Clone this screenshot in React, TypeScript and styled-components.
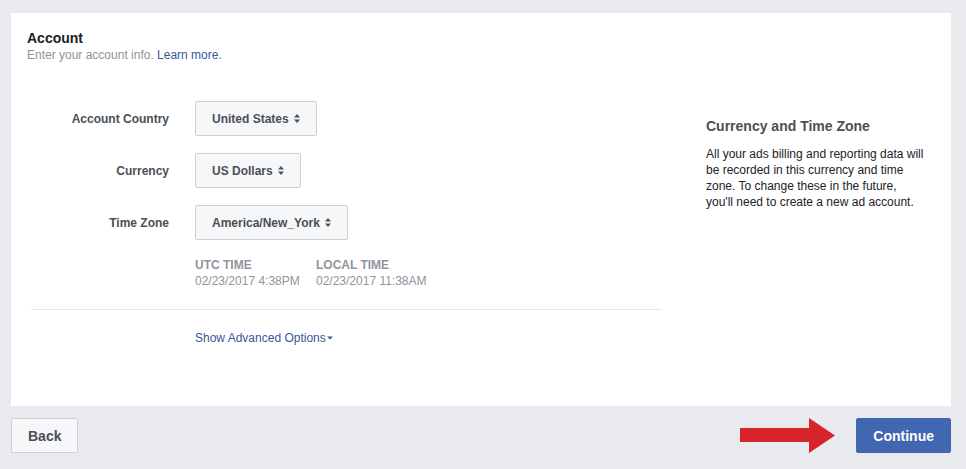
import React from "react";
import styled, { createGlobalStyle } from "styled-components";

const GlobalStyle = createGlobalStyle`
  html, body {
    margin: 0;
    padding: 0;
    background: #e9eaed;
    font-family: "Liberation Sans", Helvetica, Arial, sans-serif;
    -webkit-font-smoothing: antialiased;
  }
`;

const Page = styled.div`
  padding: 13px 15px 0 11px;
  width: 940px;
`;

const Panel = styled.div`
  background: #fff;
  height: 393px;
  box-sizing: border-box;
  padding: 16px 12px 0 16px;
`;

const Title = styled.div`
  font-size: 14px;
  line-height: 18px;
  font-weight: bold;
  color: #1d2129;
`;

const Subtitle = styled.div`
  font-size: 12px;
  line-height: 16px;
  color: #90949c;
`;

const Link = styled.a`
  color: #365899;
  text-decoration: none;
  cursor: pointer;
`;

const Body = styled.div`
  display: flex;
  margin-top: 38px;
  padding-left: 4px;
`;

const FormColumn = styled.div`
  width: 631px;
  flex-shrink: 0;
`;

const Row = styled.div`
  display: flex;
  align-items: center;
  margin-bottom: 17px;
`;

const Label = styled.div`
  width: 138px;
  padding-right: 26px;
  text-align: right;
  font-size: 12px;
  font-weight: bold;
  color: #4b4f56;
`;

const Select = styled.div`
  display: flex;
  align-items: center;
  gap: 5px;
  height: 35px;
  box-sizing: border-box;
  padding: 0 16px;
  background: #f6f7f9;
  border: 1px solid #ccd0d5;
  border-radius: 2px;
  font-size: 12px;
  font-weight: bold;
  color: #4b4f56;
  cursor: pointer;
`;

const TimeBlock = styled.div`
  display: flex;
  margin-left: 164px;
`;

const TimeCol = styled.div<{ $w?: number }>`
  width: ${(p) => (p.$w ? `${p.$w}px` : "auto")};
  font-size: 12px;
  line-height: 16px;
  color: #90949c;
`;

const TimeHead = styled.div`
  font-weight: bold;
`;

const Divider = styled.div`
  height: 1px;
  background: #e5e6e9;
  margin-top: 20px;
`;

const Advanced = styled.div`
  margin: 20px 0 0 164px;
  font-size: 12px;
  line-height: 16px;
  color: #365899;
  display: flex;
  align-items: center;
  gap: 1px;
  cursor: pointer;
`;

const Aside = styled.div`
  margin-left: 44px;
  width: 220px;
  flex-shrink: 0;
  padding-top: 16px;
`;

const AsideTitle = styled.div`
  font-size: 14px;
  line-height: 18px;
  font-weight: bold;
  color: #4b4f56;
  margin-bottom: 11px;
`;

const AsideText = styled.div`
  font-size: 12px;
  line-height: 16px;
  color: #1d2129;
`;

const Footer = styled.div`
  display: flex;
  align-items: center;
  justify-content: space-between;
  margin-top: 12px;
`;

const Button = styled.button<{ $primary?: boolean }>`
  height: 35px;
  box-sizing: border-box;
  padding: 0 16px;
  border-radius: 2px;
  border: 1px solid ${(p) => (p.$primary ? "#4267b2" : "#ccd0d5")};
  background: ${(p) => (p.$primary ? "#4267b2" : "#f6f7f9")};
  color: ${(p) => (p.$primary ? "#fff" : "#4b4f56")};
  font-family: inherit;
  font-size: 14px;
  font-weight: bold;
  cursor: pointer;
`;

const Right = styled.div`
  display: flex;
  align-items: center;
  gap: 21px;
`;

const UpDown = () => (
  <svg width="6" height="9" viewBox="0 0 6 9">
    <path d="M0 3.5 L3 0 L6 3.5 Z M0 5.5 L3 9 L6 5.5 Z" fill="#4b4f56" />
  </svg>
);

const Caret = () => (
  <svg width="6" height="4" viewBox="0 0 6 4">
    <path d="M0 0.5 L6 0.5 L3 3.5 Z" fill="#365899" />
  </svg>
);

const RedArrow = () => (
  <svg width="95" height="35" viewBox="0 0 95 35">
    <path d="M0 10 L69 10 L69 0 L95 17.5 L69 35 L69 24 L0 24 Z" fill="#d8232a" />
  </svg>
);

const fields = [
  { label: "Account Country", value: "United States" },
  { label: "Currency", value: "US Dollars" },
  { label: "Time Zone", value: "America/New_York" },
];

export default function App() {
  return (
    <Page>
      <GlobalStyle />
      <Panel>
        <Title>Account</Title>
        <Subtitle>
          Enter your account info. <Link>Learn more.</Link>
        </Subtitle>
        <Body>
          <FormColumn>
            {fields.map((f) => (
              <Row key={f.label}>
                <Label>{f.label}</Label>
                <Select>
                  {f.value}
                  <UpDown />
                </Select>
              </Row>
            ))}
            <TimeBlock>
              <TimeCol $w={121}>
                <TimeHead>UTC TIME</TimeHead>
                02/23/2017 4:38PM
              </TimeCol>
              <TimeCol>
                <TimeHead>LOCAL TIME</TimeHead>
                02/23/2017 11:38AM
              </TimeCol>
            </TimeBlock>
            <Divider />
            <Advanced>
              Show Advanced Options
              <Caret />
            </Advanced>
          </FormColumn>
          <Aside>
            <AsideTitle>Currency and Time Zone</AsideTitle>
            <AsideText>
              All your ads billing and reporting data will be recorded in this
              currency and time zone. To change these in the future, you'll need
              to create a new ad account.
            </AsideText>
          </Aside>
        </Body>
      </Panel>
      <Footer>
        <Button>Back</Button>
        <Right>
          <RedArrow />
          <Button $primary>Continue</Button>
        </Right>
      </Footer>
    </Page>
  );
}
